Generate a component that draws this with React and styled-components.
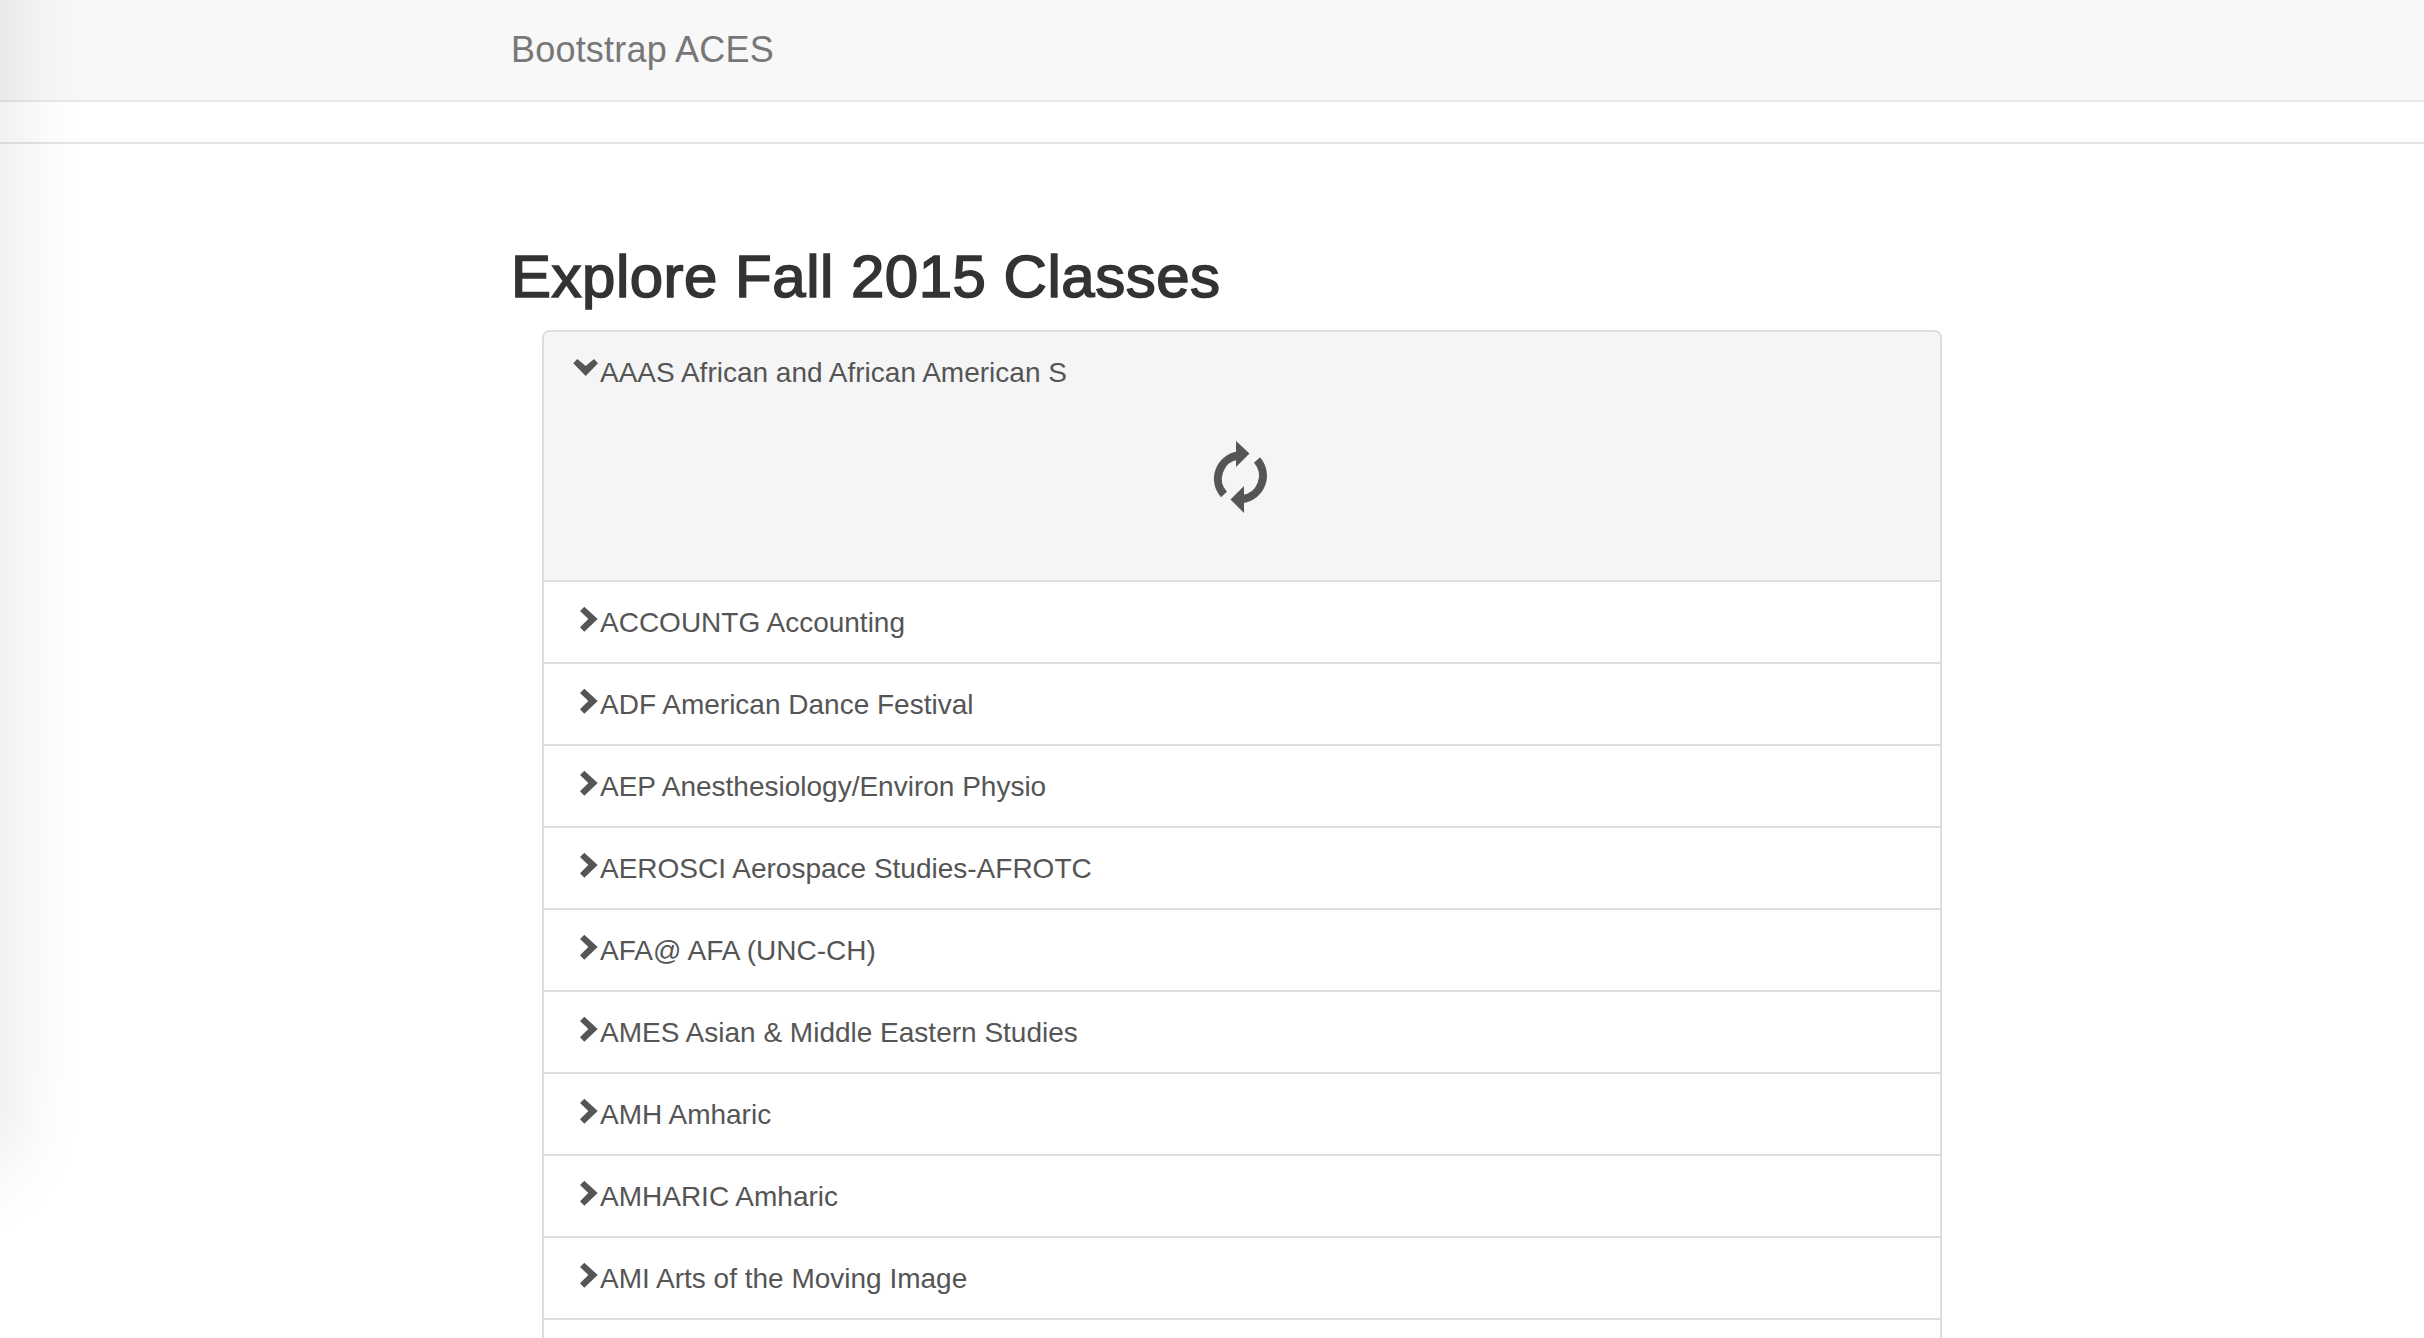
import React from "react";
import styled, { createGlobalStyle } from "styled-components";

const GlobalStyle = createGlobalStyle`
  html, body {
    margin: 0;
    padding: 0;
    height: 100%;
    overflow: hidden;
    background: #fff;
  }
  body {
    font-family: "Liberation Sans", Arial, sans-serif;
    font-size: 28px;
    line-height: 40px;
    color: #333;
  }
`;

const Page = styled.div`
  position: relative;
  height: 1338px;
  overflow: hidden;
`;

const EdgeShadow = styled.div`
  position: absolute;
  left: -50px;
  top: -80px;
  width: 40px;
  height: 1240px;
  border-radius: 0 40px 40px 0;
  box-shadow: 0 0 80px 20px rgba(0, 0, 0, 0.1);
  pointer-events: none;
`;

const Navbar = styled.nav`
  display: flex;
  align-items: center;
  height: 100px;
  padding-left: 511px;
  background: #f8f8f8;
  border-bottom: 2px solid #e7e7e7;
`;

const Brand = styled.a`
  font-size: 36px;
  letter-spacing: 0.2px;
  color: #777;
  text-decoration: none;
`;

const Rule = styled.hr`
  height: 2px;
  margin: 40px 0 0;
  border: 0;
  background: #e5e5e5;
`;

const Content = styled.main`
  padding: 100px 0 0 511px;
`;

const Title = styled.h2`
  margin: 0 0 20px;
  font-size: 60px;
  line-height: 66px;
  font-weight: 400;
  letter-spacing: 0.5px;
  -webkit-text-stroke: 1.6px #333;
  color: #333;
`;

const List = styled.ul`
  width: 1400px;
  margin: 0 0 0 31px;
  padding: 0;
  list-style: none;
  box-sizing: border-box;
  border: 2px solid #ddd;
  border-bottom: 0;
  border-radius: 8px 8px 0 0;
  overflow: hidden;
`;

const Item = styled.li`
  min-height: 40px;
  padding: 21px 28px 19px;
  color: #555;
  background: ${(props) => (props.$open ? "#f5f5f5" : "#fff")};
  border-bottom: 2px solid #ddd;
`;

const ItemLabel = styled.div`
  display: flex;
  align-items: flex-start;
`;

const ChevronBox = styled.span`
  display: inline-flex;
  flex: none;
  width: 28px;
  height: 40px;
`;

const Spinner = styled.div`
  display: flex;
  justify-content: center;
  padding: 47px 5px 45px 0;
`;

function Chevron({ open }) {
  return (
    <ChevronBox>
      {open ? (
        <svg width="28" height="40" viewBox="0 0 28 40">
          <polygon fill="#555" points="1.3,10.3 5.3,6 13.7,13 22,6 26,10.3 13.7,23" />
        </svg>
      ) : (
        <svg width="28" height="40" viewBox="0 0 28 40">
          <polygon fill="#555" points="8,8 12.3,3.7 25.7,16 12.3,28.7 8,24.3 16.3,16" />
        </svg>
      )}
    </ChevronBox>
  );
}

function RefreshIcon() {
  return (
    <svg width="60" height="76" viewBox="0 0 60 76">
      <path
        fill="none"
        stroke="#555"
        strokeWidth="8"
        d="M14 54.5A23.5 23.5 0 0 1 28 15.5"
      />
      <polygon fill="#555" points="26,1 39.5,13.5 26,27" />
      <path
        fill="none"
        stroke="#555"
        strokeWidth="8"
        d="M47 20A23.5 23.5 0 0 1 32 59"
      />
      <polygon fill="#555" points="34,46 20.5,59.5 34,73" />
    </svg>
  );
}

const departments = [
  "ACCOUNTG Accounting",
  "ADF American Dance Festival",
  "AEP Anesthesiology/Environ Physio",
  "AEROSCI Aerospace Studies-AFROTC",
  "AFA@ AFA (UNC-CH)",
  "AMES Asian & Middle Eastern Studies",
  "AMH Amharic",
  "AMHARIC Amharic",
  "AMI Arts of the Moving Image",
];

export default function App() {
  return (
    <Page>
      <GlobalStyle />
      <Navbar>
        <Brand>Bootstrap ACES</Brand>
      </Navbar>
      <Rule />
      <Content>
        <Title>Explore Fall 2015 Classes</Title>
        <List>
          <Item $open>
            <ItemLabel>
              <Chevron open />
              AAAS African and African American S
            </ItemLabel>
            <Spinner>
              <RefreshIcon />
            </Spinner>
          </Item>
          {departments.map((name) => (
            <Item key={name}>
              <ItemLabel>
                <Chevron />
                {name}
              </ItemLabel>
            </Item>
          ))}
          <Item />
        </List>
      </Content>
      <EdgeShadow />
    </Page>
  );
}
